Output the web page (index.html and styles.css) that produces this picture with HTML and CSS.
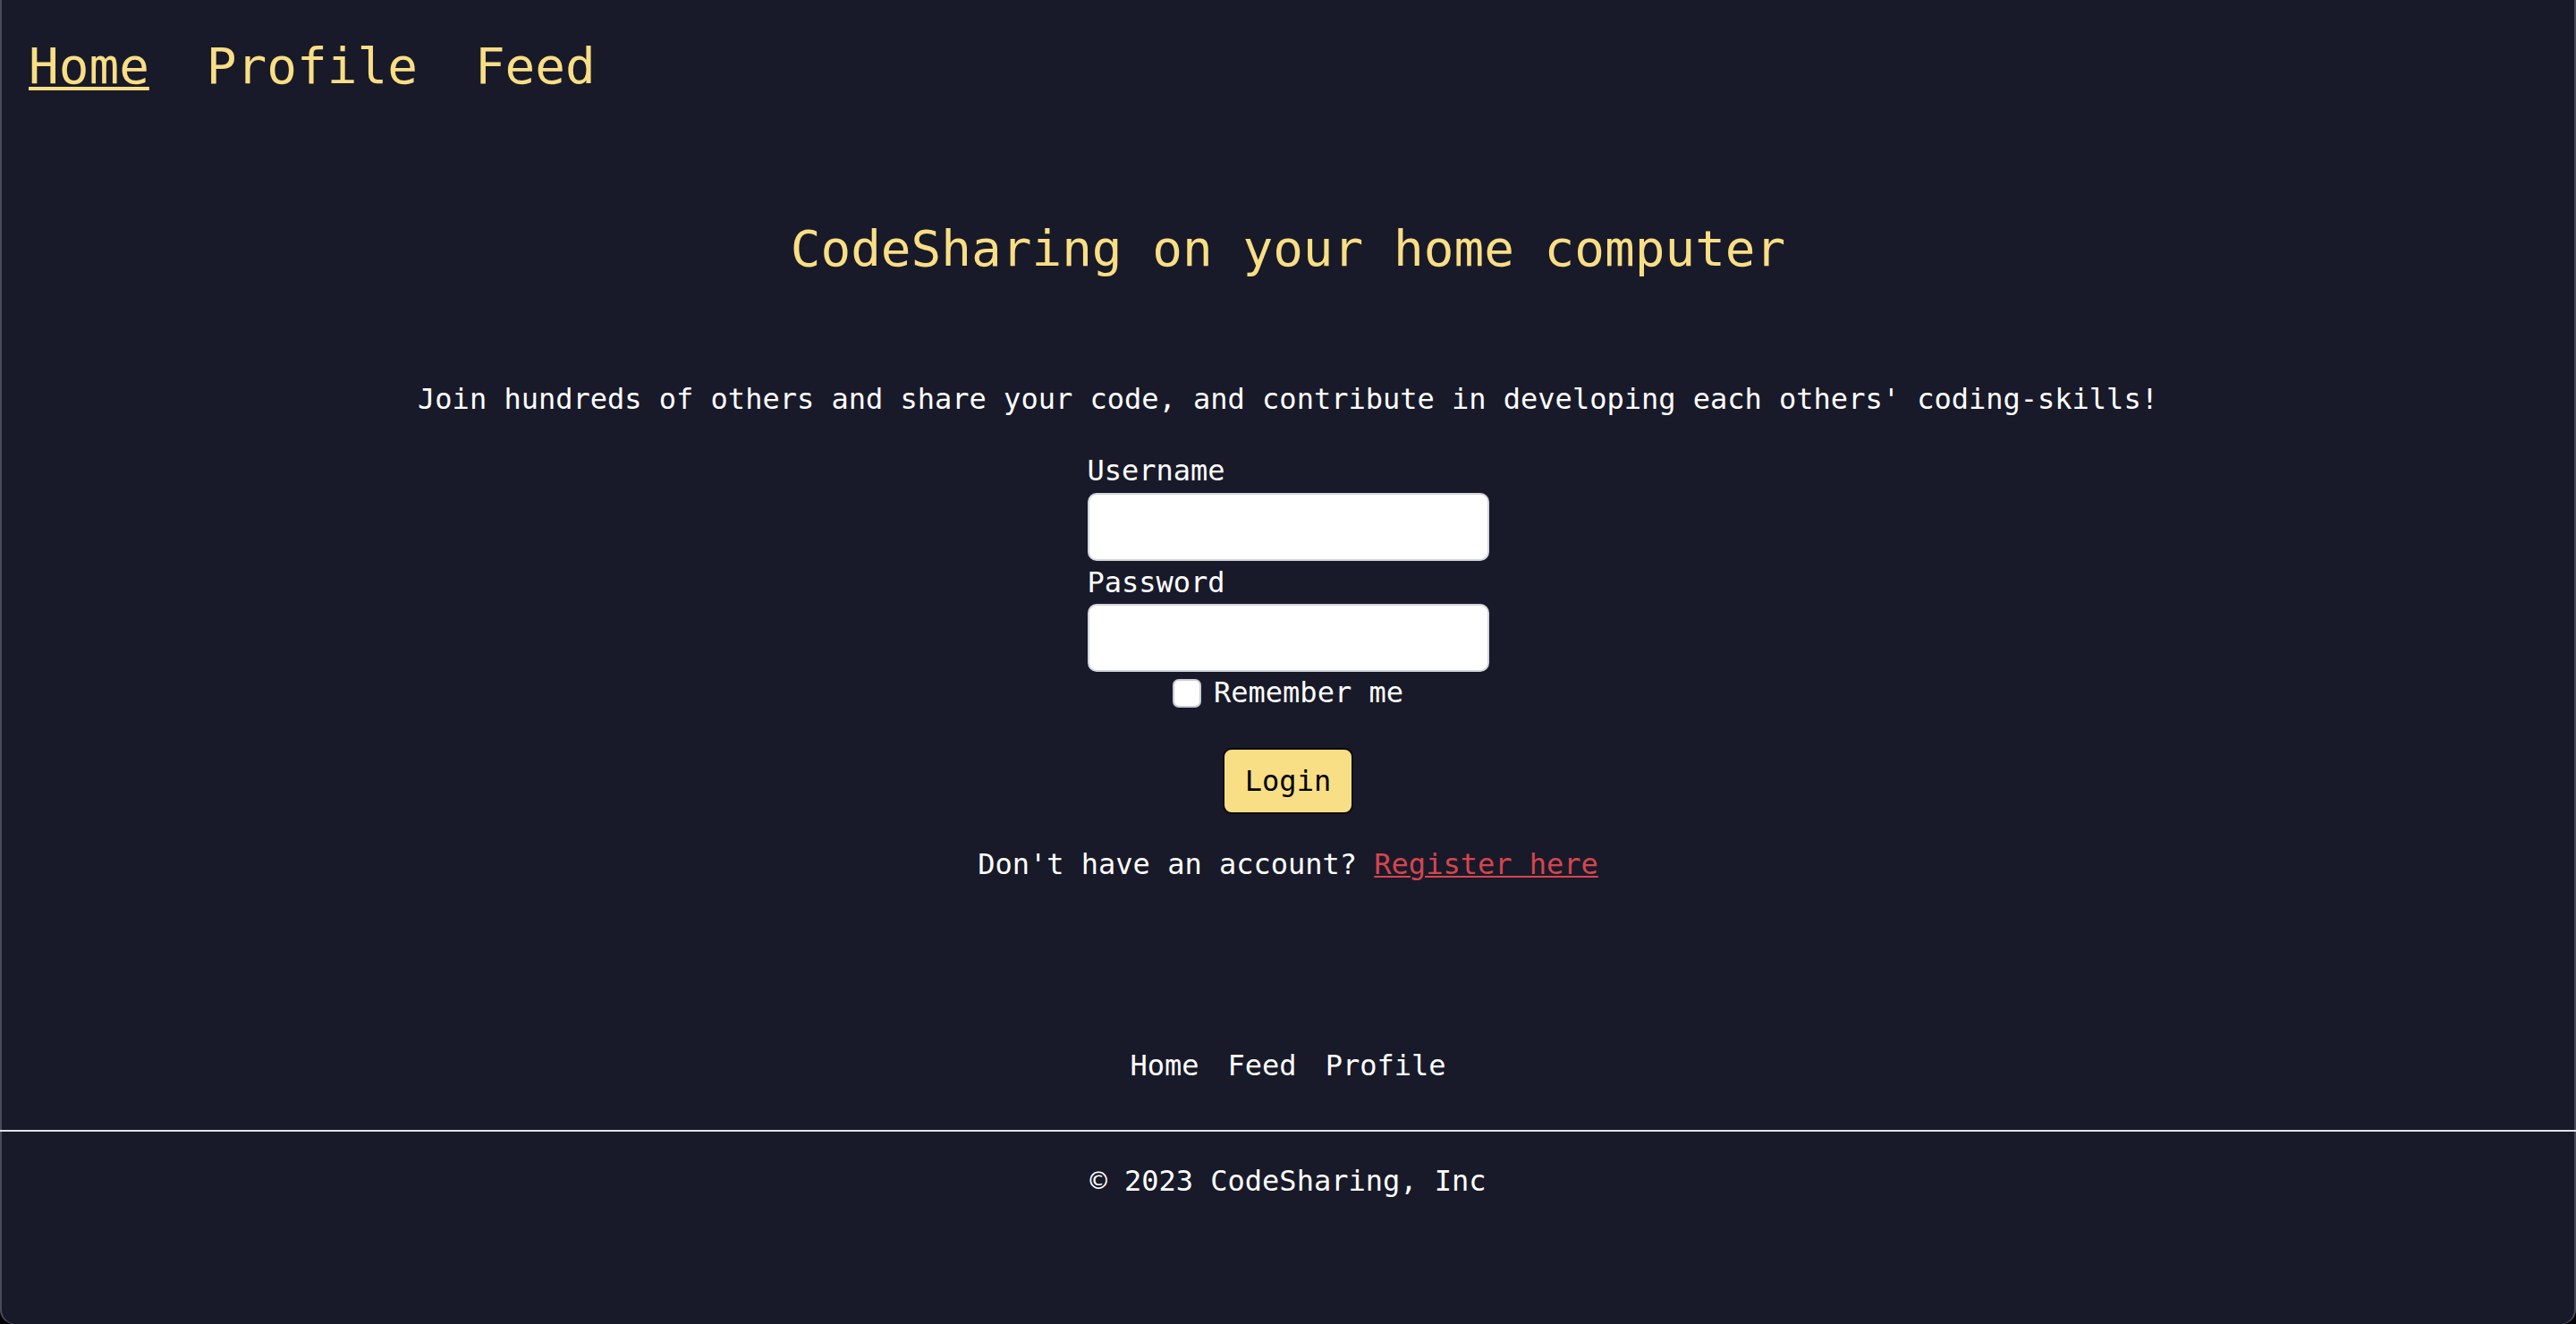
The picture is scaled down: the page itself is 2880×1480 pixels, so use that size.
FILE: index.html
```html
<!DOCTYPE html>
<html lang="en">
<head>
<meta charset="utf-8">
<title>CodeSharing</title>
<link rel="stylesheet" href="styles.css">
</head>
<body>
<div class="window">
  <nav class="topnav">
    <a class="topnav-link active" href="#">Home</a>
    <a class="topnav-link" href="#">Profile</a>
    <a class="topnav-link" href="#">Feed</a>
  </nav>
  <main class="hero">
    <h1 class="title">CodeSharing on your home computer</h1>
    <p class="lead">Join hundreds of others and share your code, and contribute in developing each others' coding-skills!</p>
    <form class="login" onsubmit="return false">
      <label class="field-label" for="username">Username</label>
      <input class="field-input" id="username" type="text">
      <label class="field-label second" for="password">Password</label>
      <input class="field-input second-input" id="password" type="password">
      <label class="remember"><input class="check" type="checkbox"><span>Remember me</span></label>
      <button class="btn" type="submit">Login</button>
    </form>
    <p class="register">Don't have an account? <a class="register-link" href="#">Register here</a></p>
  </main>
  <footer class="footer">
    <nav class="footnav">
      <a class="footnav-link" href="#">Home</a>
      <a class="footnav-link" href="#">Feed</a>
      <a class="footnav-link" href="#">Profile</a>
    </nav>
    <hr class="rule">
    <p class="copy">© 2023 CodeSharing, Inc</p>
  </footer>
</div>
</body>
</html>
```
FILE: styles.css
```css
html {
  background: #000;
}
body {
  margin: 0;
  font-family: "DejaVu Sans Mono", "Liberation Mono", monospace;
  color: #ffffff;
}
.window {
  height: 1480px;
  box-sizing: border-box;
  background: #181a29;
  border-radius: 0 0 16px 16px;
  box-shadow: inset 2px 0 0 #4a4c5b, inset -2px 0 0 #4a4c5b;
  overflow: hidden;
}
.topnav {
  display: flex;
  gap: 64px;
  padding: 41px 0 0 32px;
}
.topnav-link {
  font-size: 56px;
  line-height: 65px;
  color: #f9de85;
  text-decoration: none;
}
.topnav-link.active {
  text-decoration: underline;
  text-decoration-thickness: 4px;
  text-underline-offset: 4px;
}
.hero {
  display: flex;
  flex-direction: column;
  align-items: center;
}
.title {
  margin: 139px 0 0;
  font-size: 56px;
  line-height: 65px;
  font-weight: normal;
  color: #f9de85;
}
.lead {
  margin: 118px 0 0;
  font-size: 32px;
  line-height: 37px;
}
.login {
  margin-top: 43px;
  width: 449px;
  display: flex;
  flex-direction: column;
  align-items: stretch;
}
.field-label {
  font-size: 32px;
  line-height: 37px;
}
.field-label.second {
  margin-top: 6px;
}
.field-input {
  margin-top: 6px;
  height: 76px;
  box-sizing: border-box;
  border: 2px solid #d3d5de;
  border-radius: 10px;
  background: #fff;
  font-family: inherit;
  font-size: 28px;
  padding: 0 12px;
}
.field-input.second-input {
  margin-top: 5px;
}
.remember {
  margin-top: 5px;
  align-self: center;
  display: flex;
  align-items: center;
  gap: 14px;
  font-size: 32px;
  line-height: 37px;
}
.check {
  appearance: none;
  -webkit-appearance: none;
  margin: 0;
  width: 32px;
  height: 32px;
  box-sizing: border-box;
  border: 2px solid #c9ccd6;
  border-radius: 7px;
  background: #fff;
}
.btn {
  margin-top: 43px;
  align-self: center;
  height: 74px;
  padding: 0 23px;
  box-sizing: border-box;
  border: 2px solid #0a0b10;
  border-radius: 10px;
  background: #f8df85;
  color: #000;
  font-family: inherit;
  font-size: 32px;
  line-height: 37px;
}
.register {
  margin: 38px 0 0;
  font-size: 32px;
  line-height: 37px;
}
.register-link {
  color: #d6454f;
  text-decoration: underline;
  text-decoration-thickness: 2px;
  text-underline-offset: 2px;
}
.footer {
  display: flex;
  flex-direction: column;
  align-items: center;
}
.footnav {
  margin-top: 188px;
  display: flex;
  gap: 32px;
}
.footnav-link {
  color: #fff;
  text-decoration: none;
  font-size: 32px;
  line-height: 37px;
}
.rule {
  margin: 53px 0 0;
  align-self: stretch;
  height: 2px;
  border: 0;
  background: #dfe2ea;
}
.copy {
  margin: 37px 0 0;
  font-size: 32px;
  line-height: 37px;
}
```
